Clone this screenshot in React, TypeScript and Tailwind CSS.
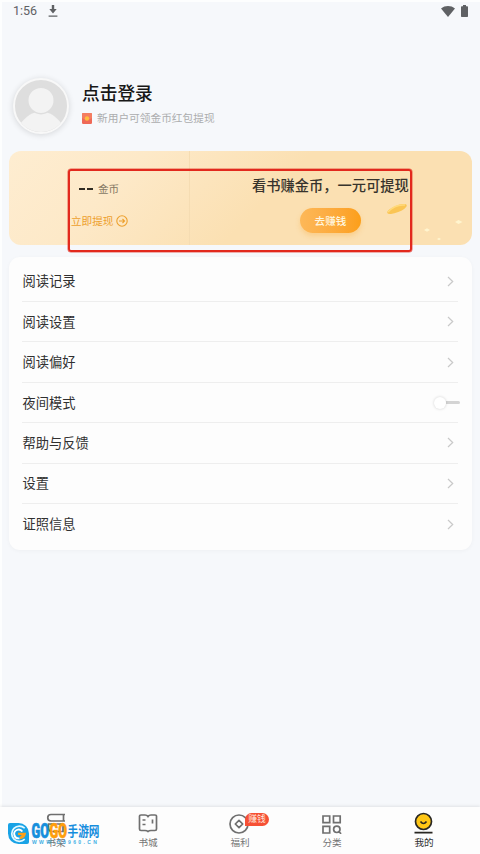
import type { ReactNode } from "react";

const menuItems = [
	{ label: "阅读记录" },
	{ label: "阅读设置" },
	{ label: "阅读偏好" },
	{ label: "夜间模式", toggle: true },
	{ label: "帮助与反馈" },
	{ label: "设置" },
	{ label: "证照信息" }
];

const StatusBar = () => (
	<div className="flex h-[22px] items-center justify-between pr-[12px] pl-[13px] text-[#5f6164]">
		<div className="flex items-center gap-[11px]">
			<span className="font-['Roboto',sans-serif] text-[12.5px] leading-none">1:56</span>
			<svg width="10" height="12" viewBox="0 0 10 12" fill="currentColor">
				<path d="M3.8 0h2.4v4h2.5L5 8.5 1.3 4h2.5zM.6 10.4h8.8v1.3H.6z" />
			</svg>
		</div>
		<div className="flex items-center gap-[6px]">
			<svg width="14" height="11" viewBox="0 0 14 11" fill="currentColor">
				<path d="M0 2.5C4-.8 10-.8 14 2.5L7 11z" />
			</svg>
			<svg width="7" height="12" viewBox="0 0 7 12" fill="currentColor">
				<path d="M2 0h3v1.3h1.3q.7 0 .7.7v9.3q0 .7-.7.7H.7Q0 12 0 11.3V2q0-.7.7-.7H2z" />
			</svg>
		</div>
	</div>
);

const Profile = () => (
	<div className="mt-[56px] flex h-[55px] items-center pl-[13px]">
		<div className="size-[56px] rounded-full border-2 border-[#f8f8f8] bg-[#dedede] shadow-[0_1px_6px_rgba(0,0,0,0.14)]">
			<svg className="size-full rounded-full" viewBox="0 0 51 51">
				<path d="M6 51V42C11 36 17 31 25.5 31S40 36 45 42V51z" fill="#f3f3f3" />
				<circle cx="25.5" cy="20" r="13" fill="#f3f3f3" stroke="#dedede" strokeWidth="1.5" />
			</svg>
		</div>
		<div className="-mt-[5px] ml-[13px] flex flex-col">
			<h1 className="text-[17.7px] leading-[24px] font-medium text-[#171717]">点击登录</h1>
			<p className="mt-[6px] flex items-center gap-[5px] text-[10.7px] leading-[16px] text-[#acadae]">
				<svg width="10" height="11" viewBox="0 0 10 11">
					<rect width="10" height="11" rx="1.2" fill="#ef6957" />
					<path d="M0 1.2Q0 0 1.2 0h7.6Q10 0 10 1.2V5Q5 9 0 5z" fill="#f47d60" />
					<circle cx="5" cy="5.5" r="2.2" fill="#ffbd3f" />
				</svg>
				新用户可领金币红包提现
			</p>
		</div>
	</div>
);

const CoinCard = () => (
	<section className="relative mx-[9px] mt-[18px] flex h-[94px] w-[463px] rounded-[12px] bg-[linear-gradient(135deg,#feedd1_0%,#fde9c8_25%,#fbe0b2_55%,#fbe0b2_100%)]">
		<div className="w-[181px] border-r border-[#f5dcb2] pt-[28px] pl-[62px]">
			<div className="flex h-[20px] items-center gap-[5px] pl-[8px]">
				<span className="flex gap-[2px]">
					<i className="h-[2px] w-[6px] bg-[#302b22]" />
					<i className="h-[2px] w-[6px] bg-[#302b22]" />
				</span>
				<span className="text-[10.6px] leading-[20px] text-[#857864]">金币</span>
			</div>
			<div className="mt-[14px] flex h-[16px] items-center gap-[3px] text-[10.6px] leading-[16px] text-[#eda02d]">
				立即提现
				<svg width="12" height="12" viewBox="0 0 12 12" fill="none" stroke="currentColor" strokeWidth="1.1">
					<circle cx="6" cy="6" r="5.2" />
					<path d="M3 6h5.5M6.5 4l2 2-2 2" />
				</svg>
			</div>
		</div>
		<div className="flex w-[282px] flex-col pt-[24px] pl-[62px]">
			<h2 className="text-[14.25px] leading-[20px] font-medium whitespace-nowrap text-[#37332c]">看书赚金币，一元可提现</h2>
			<button className="mt-[13px] ml-[48px] h-[25px] w-[61px] rounded-full bg-linear-to-r from-[#fdb858] to-[#fc9f18] text-[10.6px] leading-[25px] font-medium text-[#fff6df] shadow-[0_3px_5px_rgba(248,167,49,0.3)]">
				去赚钱
			</button>
		</div>
		<svg className="absolute top-[47px] right-0" width="96" height="46" viewBox="0 0 96 46">
			<ellipse cx="21" cy="11" rx="10.5" ry="3.3" transform="rotate(-22 21 11)" fill="#fac554" />
			<path d="M12 14Q19 6 29 7" fill="none" stroke="#ffda7b" strokeWidth="1.5" />
			<path d="m48 32 3-1.8 3 1.8-3 1.8zM79 24l3.500-2 4 2-4 2zM61 41l2-1.300 2 1.300-2 1.300z" fill="#fff5cf" />
		</svg>
		<div className="absolute top-[17.5px] left-[58.5px] h-[83px] w-[344.5px] rounded-[3px] border-2 border-[#e2291d] ring-[0.5px] ring-[#e2291d]/70" />
	</section>
);

const Chevron = () => (
	<svg className="mr-[4px]" width="7" height="11" viewBox="0 0 7 11" fill="none" stroke="#c9c9c9" strokeWidth="1.2">
		<path d="m1 1 4.700 4.500L1 10" />
	</svg>
);

const Switch = () => (
	<span className="-mr-[2px] flex items-center">
		<i className="z-10 size-[12px] rounded-full bg-white shadow-[0_0_3px_rgba(0,0,0,0.18)]" />
		<i className="h-[3px] w-[14px] rounded-r-sm bg-[#d4d4d4]" />
	</span>
);

const Menu = () => (
	<ul className="mx-[9px] mt-[11.5px] h-[293px] w-[463px] rounded-[11px] bg-[#fdfdfd] pt-[5px] pr-[14px] pl-[13px] shadow-[0_1px_4px_rgba(0,0,0,0.035)]">
		{menuItems.map(({ label, toggle }) => (
			<li key={label} className="flex h-[40.45px] items-center justify-between border-b border-[#eeeeee] pl-[0.5px] text-[13.25px] text-[#303030] last:border-0">
				<span>{label}</span>
				{toggle ? <Switch /> : <Chevron />}
			</li>
		))}
	</ul>
);

const NavItem = ({ label, children, active }: { label: string; children: ReactNode; active?: boolean }) => (
	<div className={`flex w-[92px] flex-col items-center pt-[5px] text-[9.6px] leading-[14px] ${active ? "text-[#303030]" : "text-[#747474]"}`}>
		<svg width="22" height="22" viewBox="0 0 22 22" fill="none" stroke={active ? "#292722" : "#6f6f6f"} strokeWidth="1.7">
			{children}
		</svg>
		<span className="mt-[1px]">{label}</span>
	</div>
);

const Watermark = () => (
	<div className="absolute top-[16px] left-[8px] flex items-start">
		<svg width="21" height="21" viewBox="0 0 22 22">
			<path d="M0 11V2Q0 0 2 0h9a11 11 0 0 1 11 11v9q0 2-2 2h-9A11 11 0 0 1 0 11z" fill="#19a3e6" />
			<path d="M17.5 5.500A8 8 0 1 0 17.500 17" fill="none" stroke="#e5f9ff" strokeWidth="1.8" />
			<path d="M15 9A4.600 4.600 0 1 0 12 16" fill="none" stroke="#fff" strokeWidth="2" />
			<path d="M10.5 10.300h8.500q-.5 6-6.500 6.700v-2.500l2-2h-4z" fill="#ff9f16" />
		</svg>
		<div className="ml-[2px] flex flex-col">
			<svg width="70" height="17" viewBox="0 0 70 17" overflow="visible">
				<g fontFamily="Roboto" fontSize="20" fontWeight="900" strokeWidth="0.7">
					<text x="0.5" y="15.3" textLength="17.5" lengthAdjust="spacingAndGlyphs" fill="#168fdc" stroke="#168fdc">GO</text>
					<text x="18.5" y="15.3" textLength="17.5" lengthAdjust="spacingAndGlyphs" fill="#ff9e0c" stroke="#ff9e0c">GO</text>
				</g>
				<text x="36.5" y="13" fontSize="13.5" fontWeight="700" fontFamily="Noto Sans CJK SC" textLength="32" lengthAdjust="spacingAndGlyphs" fill="#158ddd">手游网</text>
			</svg>
			<span className="pl-[1px] font-['Liberation_Sans',sans-serif] text-[5px] leading-[5px] font-bold tracking-[2.35px] whitespace-nowrap text-[#42aee4]">WWW.G0960.CN</span>
		</div>
	</div>
);

const BottomNav = () => (
	<nav className="relative flex h-[47px] bg-[#fdfdfd] px-[10px] shadow-[0_-1px_3px_rgba(0,0,0,0.09)]">
		<NavItem label="书架">
			<path d="M20 2.500H6a3 3 0 0 0 0 6.500h14M18.500 2.500V9M3.500 12h14.500v7.500H6.500a3 3 0 0 1-3-3z" />
		</NavItem>
		<NavItem label="书城">
			<path d="M2.500 4Q2.500 3 4 3h4q2 0 3 1.500Q12 3 14 3h4q1.500 0 1.500 1v13q0 1.500-1.500 1.500h-4q-2 0-3 1-1-1-3-1H4q-1.500 0-1.500-1.500zM5.500 8H8.500m-3 4.500h3M15.500 7.500v4" />
		</NavItem>
		<NavItem label="福利">
			<circle cx="10" cy="12" r="9" />
			<path d="M10 8.300 13.700 12 10 15.700 6.300 12z" strokeLinejoin="round" />
		</NavItem>
		<NavItem label="分类">
			<path d="M2 4h6.700v6.700H2zM12.500 4h6.700v6.700h-6.700zM2 14.300h6.700V21H2zM17.800 19.500l2.300 2.300" />
			<circle cx="15.8" cy="17.3" r="3.2" />
		</NavItem>
		<NavItem label="我的" active>
			<circle cx="10.5" cy="9.5" r="8" fill="#ffc716" />
			<path d="M7.500 9.500q3 4 6 0M1.500 20.700h18" />
		</NavItem>
		<span className="absolute top-[6px] left-[245px] flex h-[13px] w-[24px] items-center justify-center rounded-full rounded-bl-sm bg-[#f65035] text-[8.8px] leading-none whitespace-nowrap text-[#ffe9df]">赚钱</span>
		<Watermark />
	</nav>
);

export default function App() {
	return (
		<main className="flex h-[854px] w-[480px] flex-col overflow-hidden bg-[#f6f8fb] font-['Noto_Sans_CJK_SC',sans-serif] shadow-[inset_2px_2px_0_#fdfefe]">
			<StatusBar />
			<Profile />
			<CoinCard />
			<Menu />
			<div className="flex-1" />
			<BottomNav />
		</main>
	);
}
